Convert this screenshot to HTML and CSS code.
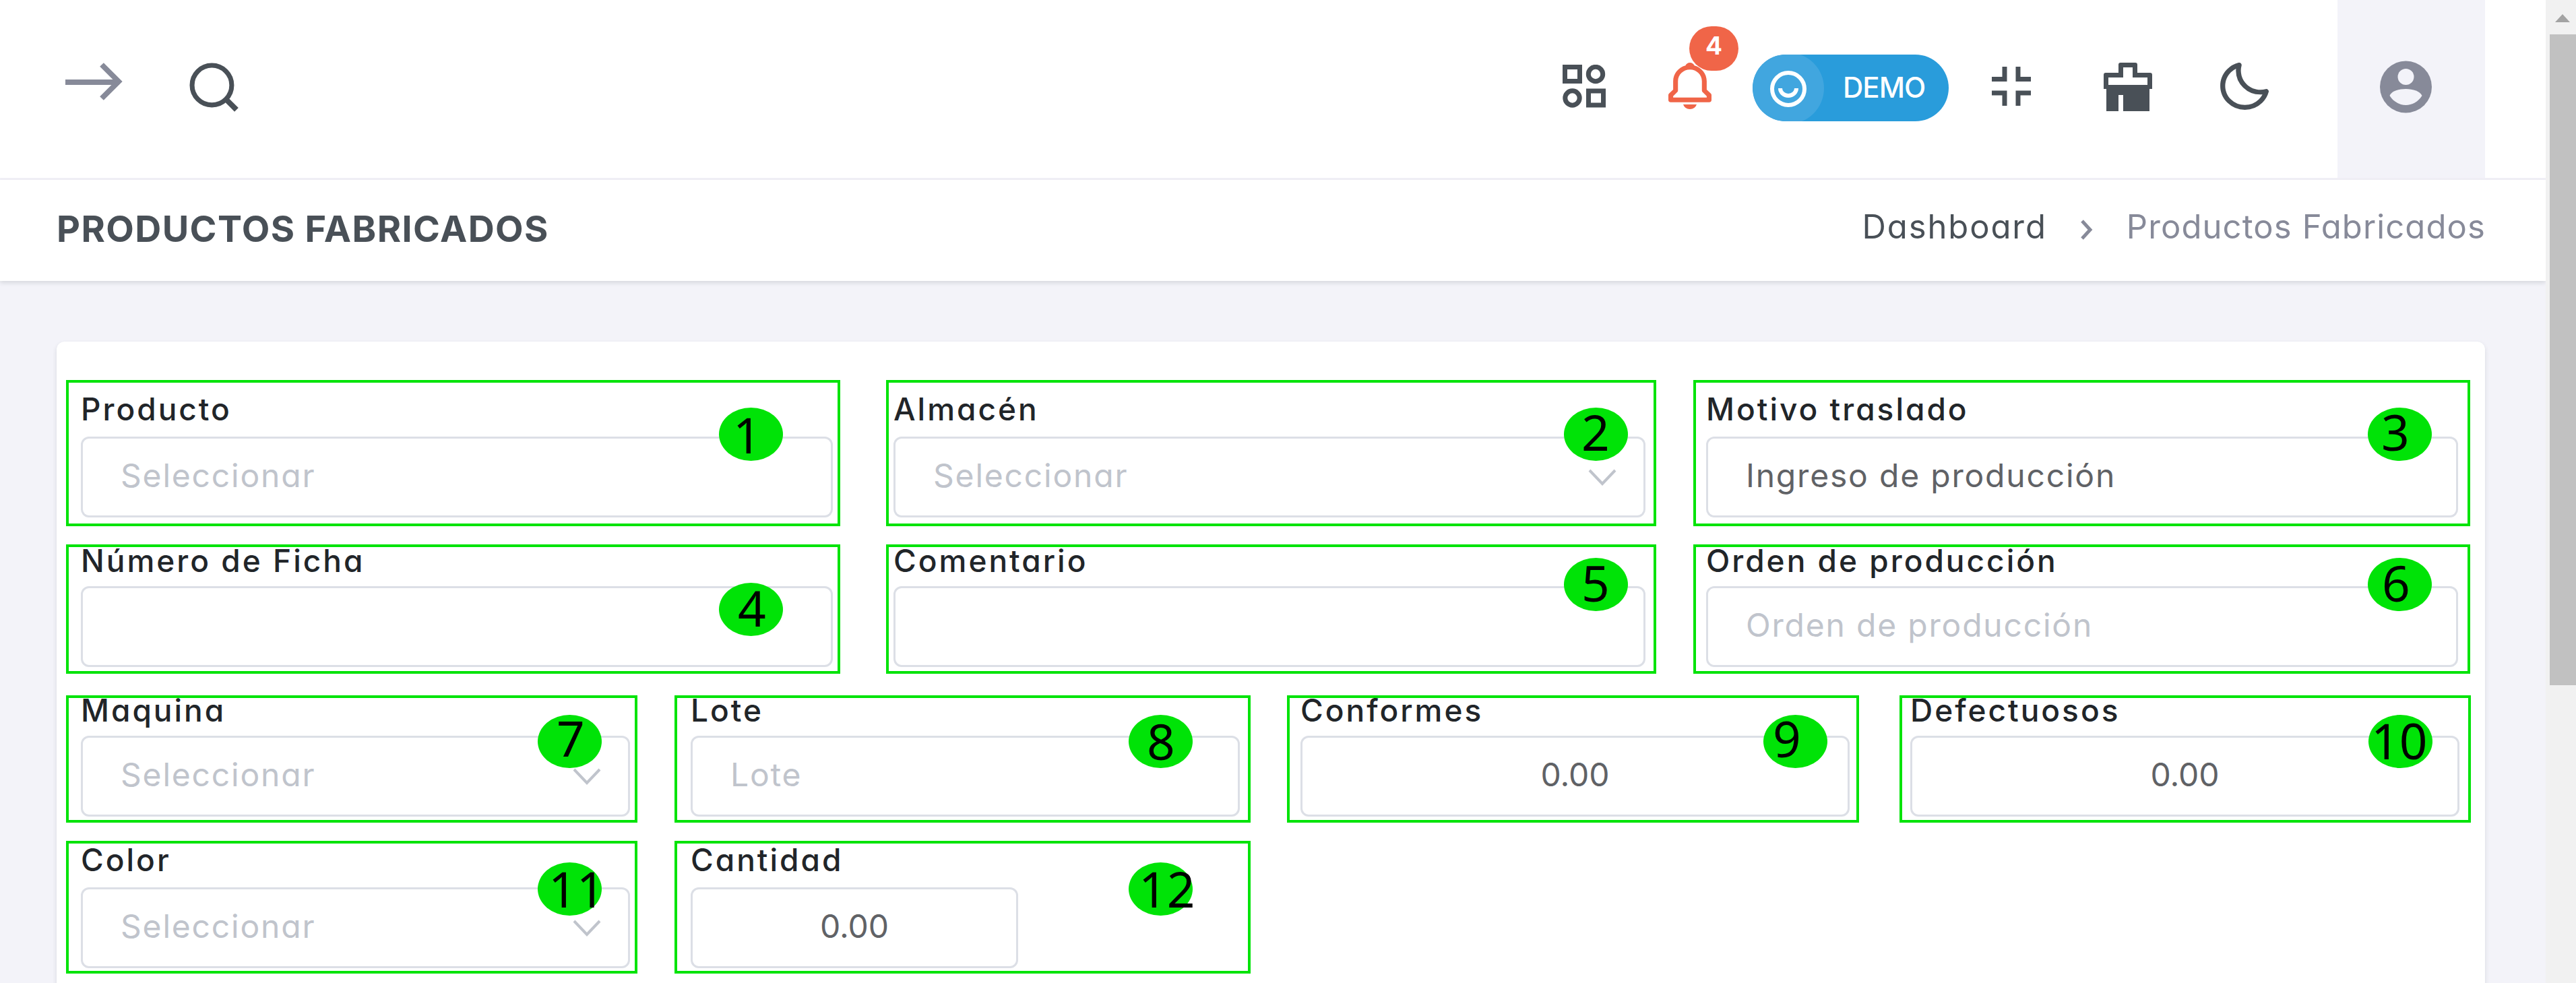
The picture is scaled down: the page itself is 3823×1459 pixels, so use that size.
FILE: index.html
```html
<!DOCTYPE html>
<html lang="es">
<head>
    <meta charset="UTF-8">
    <meta name="viewport" content="width=device-width, initial-scale=1.0">
    <title>Productos Fabricados</title>
    <link rel="stylesheet" href="styles.css">
</head>
<body>
<div class="page">
    <div class="content">
        <header class="topbar">
            <svg class="icon-arrow" viewBox="0 0 88 58" fill="none"><path d="M1 30H81M55 4L80 29L55 54" stroke="currentColor" stroke-width="8"/></svg>
            <svg class="icon-search" viewBox="0 0 72 72" fill="none" stroke="currentColor"><circle cx="33" cy="33" r="29" stroke-width="7"/><path d="M54 54L69 69" stroke-width="8"/></svg>

            <svg class="icon-apps" viewBox="0 0 64 64" fill="none" stroke="currentColor" stroke-width="7"><rect x="3.5" y="3.5" width="22" height="21"/><circle cx="49" cy="14" r="10.7"/><circle cx="14.5" cy="49.5" r="10.7"/><rect x="38.5" y="39" width="22" height="21"/></svg>
            <div class="bell">
                <svg viewBox="3 2 18 20" preserveAspectRatio="none" fill="currentColor"><path d="M19 13.586V10c0-3.217-2.185-5.927-5.145-6.742C13.562 2.52 12.846 2 12 2s-1.562.52-1.855 1.258C7.185 4.074 5 6.783 5 10v3.586l-1.707 1.707A.996.996 0 0 0 3 16v2a1 1 0 0 0 1 1h16a1 1 0 0 0 1-1v-2a.996.996 0 0 0-.293-.707L19 13.586zM19 17H5v-.586l1.707-1.707A.996.996 0 0 0 7 14v-4c0-2.757 2.243-5 5-5s5 2.243 5 5v4c0 .266.105.52.293.707L19 16.414V17zm-7 5a2.98 2.98 0 0 0 2.818-2H9.182A2.98 2.98 0 0 0 12 22z"/></svg>
                <span class="badge">4</span>
            </div>
            <div class="demo">
                <span class="demo-icon"><svg viewBox="0 0 56 56" fill="none" stroke="#fff" stroke-width="6"><circle cx="28" cy="28" r="24"/><path d="M16 27a12 11 0 0 0 24 0"/></svg></span>
                <span class="demo-text">DEMO</span>
            </div>
            <svg class="icon-exit" viewBox="0 0 58 58" fill="none" stroke="currentColor" stroke-width="7"><path d="M0 18.5H19V0M58 18.5H39V0M0 39H19V58M58 39H39V58"/></svg>
            <svg class="icon-brush" viewBox="0 0 72 72" fill="currentColor"><path fill-rule="evenodd" d="M22 3a3 3 0 0 1 3-3h22a3 3 0 0 1 3 3v12h19a3 3 0 0 1 3 3v21h-4v33H29V48h-7v24H4V39H0V18a3 3 0 0 1 3-3h19zM29 7v15H7v11h58V22H43V7z"/></svg>
            <svg class="icon-moon" viewBox="2.3 2 19.7 19.7" preserveAspectRatio="none" fill="currentColor"><path d="M20.742 13.045a8.088 8.088 0 0 1-2.077.271c-2.135 0-4.14-.83-5.646-2.336a8.025 8.025 0 0 1-2.064-7.723A1 1 0 0 0 9.73 2.034a10.014 10.014 0 0 0-4.489 2.582c-3.898 3.898-3.898 10.243 0 14.143a9.937 9.937 0 0 0 7.072 2.93 9.93 9.93 0 0 0 7.07-2.929 10.007 10.007 0 0 0 2.583-4.491 1.001 1.001 0 0 0-1.224-1.224zm-2.772 4.301a7.947 7.947 0 0 1-5.656 2.343 7.953 7.953 0 0 1-5.658-2.344c-3.118-3.119-3.118-8.195 0-11.314a7.923 7.923 0 0 1 2.06-1.483 10.027 10.027 0 0 0 2.89 7.848 9.972 9.972 0 0 0 7.848 2.891 8.036 8.036 0 0 1-1.484 2.059z"/></svg>
            <div class="user">
                <svg viewBox="0 0 78 78"><circle cx="38.5" cy="39" r="38.5" fill="#878a99"/><circle cx="38.5" cy="24" r="12" fill="#f3f3f9"/><path d="M14.5 52C20 38.500 57 38.500 62.500 52C51 70.500 26 70.500 14.500 52z" fill="#f3f3f9"/></svg>
            </div>
        </header>

        <div class="title-bar">
            <h4 class="title">PRODUCTOS FABRICADOS</h4>
            <div class="breadcrumb">
                <span class="crumb-link">Dashboard</span>
                <svg viewBox="0 0 18 30" fill="none" stroke="currentColor" stroke-width="5"><path d="M2 2L14 15L2 28"/></svg>
                <span class="crumb-active">Productos Fabricados</span>
            </div>
        </div>

        <form class="card">
            <div class="row row-3 tall">
                <div class="field">
                    <label>Producto</label>
                    <div class="control placeholder">Seleccionar</div>
                    <div class="frame frame-1"></div>
                    <span class="marker marker-1">1</span>
                </div>
                <div class="field">
                    <label>Almacén</label>
                    <div class="control placeholder">Seleccionar<svg class="chevron" viewBox="0 0 42 26"><path d="M2 2L21 22L40 2"/></svg></div>
                    <div class="frame frame-2"></div>
                    <span class="marker marker-2">2</span>
                </div>
                <div class="field">
                    <label>Motivo traslado</label>
                    <div class="control">Ingreso de producción</div>
                    <div class="frame frame-3"></div>
                    <span class="marker marker-3">3</span>
                </div>
            </div>
            <div class="row row-3">
                <div class="field">
                    <label>Número de Ficha</label>
                    <div class="control"></div>
                    <div class="frame frame-4"></div>
                    <span class="marker marker-4">4</span>
                </div>
                <div class="field">
                    <label>Comentario</label>
                    <div class="control"></div>
                    <div class="frame frame-5"></div>
                    <span class="marker marker-5">5</span>
                </div>
                <div class="field">
                    <label>Orden de producción</label>
                    <div class="control placeholder">Orden de producción</div>
                    <div class="frame frame-6"></div>
                    <span class="marker marker-6">6</span>
                </div>
            </div>
            <div class="row row-4">
                <div class="field">
                    <label>Maquina</label>
                    <div class="control placeholder">Seleccionar<svg class="chevron" viewBox="0 0 42 26"><path d="M2 2L21 22L40 2"/></svg></div>
                    <div class="frame frame-7"></div>
                    <span class="marker marker-7">7</span>
                </div>
                <div class="field">
                    <label>Lote</label>
                    <div class="control placeholder">Lote</div>
                    <div class="frame frame-8"></div>
                    <span class="marker marker-8">8</span>
                </div>
                <div class="field">
                    <label>Conformes</label>
                    <div class="control number">0.00</div>
                    <div class="frame frame-9"></div>
                    <span class="marker marker-9">9</span>
                </div>
                <div class="field">
                    <label>Defectuosos</label>
                    <div class="control number">0.00</div>
                    <div class="frame frame-10"></div>
                    <span class="marker marker-10">10</span>
                </div>
            </div>
            <div class="row row-4 tall">
                <div class="field">
                    <label>Color</label>
                    <div class="control placeholder">Seleccionar<svg class="chevron" viewBox="0 0 42 26"><path d="M2 2L21 22L40 2"/></svg></div>
                    <div class="frame frame-11"></div>
                    <span class="marker marker-11">11</span>
                </div>
                <div class="field">
                    <label>Cantidad</label>
                    <div class="control number short">0.00</div>
                    <div class="frame frame-12"></div>
                    <span class="marker marker-12">12</span>
                </div>
            </div>
        </form>
    </div>

    <div class="scrollbar">
        <svg viewBox="0 0 22 12"><path d="M11 0L22 12H0z" fill="#a3a3a3"/></svg>
        <div class="thumb"></div>
    </div>
</div>
</body>
</html>
```
FILE: styles.css
```css
* {
    box-sizing: border-box;
}
body {
    margin: 0;
    background-color: #f3f3f9;
    font-family: Inter, "Open Sans", sans-serif;
    font-feature-settings: "cv11";
    color: #212529;
    overflow: hidden;
}
svg {
    display: block;
}
.page {
    display: flex;
    height: 1459px;
    overflow: hidden;
}
.content {
    width: 3778px;
}

/* top bar */
.topbar {
    display: flex;
    align-items: flex-start;
    height: 267px;
    padding: 0 90px 0 96px;
    background-color: #fff;
    border-bottom: 3px solid #f1f0f7;
    color: #495057;
}
.icon-arrow {
    width: 88px;
    height: 58px;
    margin-top: 92px;
    color: #878a99;
}
.icon-search {
    width: 73px;
    height: 73px;
    margin: 93px auto 0 97px;
}
.icon-apps {
    width: 64px;
    height: 64px;
    margin: 96px 93px 0 0;
}
.bell {
    position: relative;
    margin: 93px 61px 0 0;
    color: #f06548;
}
.bell svg {
    width: 64px;
    height: 69px;
}
.badge {
    position: absolute;
    left: 31px;
    top: -54px;
    width: 73px;
    height: 66px;
    border-radius: 33px;
    background-color: #f06548;
    color: #fff;
    font-size: 37px;
    font-weight: 700;
    line-height: 57px;
    text-align: center;
}
.demo {
    display: flex;
    align-items: center;
    width: 291px;
    height: 99px;
    margin: 81px 64px 0 0;
    border-radius: 50px;
    background-color: #299cdb;
    overflow: hidden;
}
.demo-icon {
    width: 106px;
    height: 106px;
    padding: 26px 25px;
    border-radius: 50%;
    background-color: #41a6df;
}
.demo-icon svg {
    width: 56px;
    height: 56px;
}
.demo-text {
    margin: 0 0 3px 28px;
    color: #fff;
    font-size: 42px;
    font-weight: 500;
    letter-spacing: -1px;
}
.icon-exit {
    width: 58px;
    height: 58px;
    margin: 99px 108px 0 0;
}
.icon-brush {
    width: 72px;
    height: 72px;
    margin: 93px 101px 0 0;
}
.icon-moon {
    width: 72px;
    height: 70px;
    margin: 93px 102px 0 0;
}
.user {
    width: 219px;
    height: 264px;
    padding: 90px 0 0 63px;
    background-color: #f3f3f9;
}
.user svg {
    width: 78px;
    height: 78px;
}

/* title and breadcrumb */
.title-bar {
    display: flex;
    justify-content: space-between;
    align-items: center;
    height: 150px;
    padding: 0 89px 6px 84px;
    background-color: #fff;
    box-shadow: 0 3px 6px rgba(56, 65, 74, 0.15);
}
.title {
    margin: 0;
    color: #495057;
    font-size: 54px;
    font-weight: 700;
    letter-spacing: 1.4px;
}
.breadcrumb {
    display: flex;
    align-items: center;
    margin-bottom: 5px;
    font-size: 49px;
    color: #878a99;
}
.breadcrumb svg {
    width: 18px;
    height: 30px;
    margin: 9px 50px 0 50px;
}
.crumb-link {
    color: #495057;
    letter-spacing: 1.9px;
}
.crumb-active {
    letter-spacing: 1.1px;
}

/* form */
.card {
    width: 3604px;
    height: 1000px;
    margin: 90px 0 0 84px;
    padding: 71px 0 0 36px;
    border-radius: 12px;
    background-color: #fff;
    box-shadow: 0 3px 6px rgba(56, 65, 74, 0.15);
}
.row {
    display: grid;
    column-gap: 90px;
    margin-bottom: 35px;
}
.row-3 {
    grid-template-columns: repeat(3, 1116px);
}
.row-4 {
    grid-template-columns: repeat(4, 815px);
}
.field {
    position: relative;
}
.field label {
    display: block;
    height: 60px;
    margin-bottom: 7px;
    line-height: 58px;
    font-size: 46px;
    font-weight: 500;
    letter-spacing: 3px;
    white-space: nowrap;
}
.tall label {
    margin-bottom: 10px;
}
.control {
    position: relative;
    display: flex;
    align-items: center;
    height: 120px;
    padding: 0 56px 6px;
    border: 3px solid #dcdfe6;
    border-radius: 12px;
    color: #606266;
    font-size: 48px;
    letter-spacing: 1.8px;
    white-space: nowrap;
}
.placeholder {
    color: #c0c4cc;
}
.number {
    justify-content: center;
    letter-spacing: 0;
}
.short {
    width: 486px;
}
.chevron {
    position: absolute;
    right: 40px;
    top: 45px;
    width: 42px;
    height: 26px;
    fill: none;
    stroke: #c0c4cc;
    stroke-width: 4;
}

/* numbered callouts drawn over the fields */
.frame {
    position: absolute;
    border: 4px solid #00e307;
}
.frame-1 { left: -22px; right: -11px; top: -14px; bottom: -13px; }
.frame-2 { left: -11px; right: -16px; top: -14px; bottom: -13px; }
.frame-3 { left: -19px; right: -18px; top: -14px; bottom: -13px; }
.frame-4 { left: -22px; right: -11px; top: 5px; bottom: -10px; }
.frame-5 { left: -11px; right: -16px; top: 5px; bottom: -10px; }
.frame-6 { left: -19px; right: -18px; top: 5px; bottom: -10px; }
.frame-7 { left: -22px; right: -11px; top: 7px; bottom: -9px; }
.frame-8 { left: -24px; right: -16px; top: 7px; bottom: -9px; }
.frame-9 { left: -20px; right: -14px; top: 7px; bottom: -9px; }
.frame-10 { left: -16px; right: -17px; top: 7px; bottom: -9px; }
.frame-11 { left: -22px; right: -11px; top: 1px; bottom: -8px; }
.frame-12 { left: -24px; right: -16px; top: 1px; bottom: -8px; }

.marker {
    position: absolute;
    width: 95px;
    height: 79px;
    border-radius: 50%;
    background-color: #00e307;
    color: #000;
    font-family: "Noto Sans", sans-serif;
    font-size: 73px;
    line-height: 73px;
    white-space: nowrap;
}
.marker-1 { left: 947px; top: 27px; padding-left: 21px; line-height: 79px; }
.marker-2 { left: 995px; top: 27px; padding-left: 26px; line-height: 71px; }
.marker-3 { left: 982px; top: 27px; padding-left: 20px; line-height: 71px; }
.marker-4 { left: 947px; top: 62px; padding-left: 28px; }
.marker-5 { left: 995px; top: 25px; padding-left: 26px; }
.marker-6 { left: 982px; top: 25px; padding-left: 21px; }
.marker-7 { left: 678px; top: 36px; padding-left: 28px; line-height: 68px; }
.marker-8 { left: 650px; top: 36px; padding-left: 27px; line-height: 77px; }
.marker-9 { left: 687px; top: 36px; padding-left: 14px; line-height: 70px; }
.marker-10 { left: 680px; top: 36px; padding-left: 4px; line-height: 76px; }
.marker-11 { left: 678px; top: 33px; padding-left: 16px; line-height: 77px; }
.marker-12 { left: 650px; top: 33px; padding-left: 15px; line-height: 77px; }

/* page scrollbar */
.scrollbar {
    width: 45px;
    height: 1459px;
    background-color: #f1f1f1;
    padding-top: 21px;
}
.scrollbar svg {
    width: 22px;
    height: 12px;
    margin-left: 14px;
}
.thumb {
    height: 966px;
    margin: 18px 0 0 6px;
    background-color: #c1c1c1;
}
```
